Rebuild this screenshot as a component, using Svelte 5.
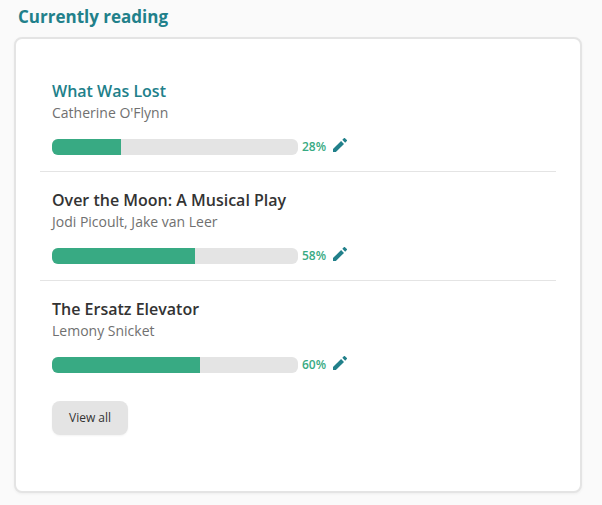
<script>
	let books = [
		{ title: 'What Was Lost', author: "Catherine O'Flynn", progress: 28, active: true },
		{ title: 'Over the Moon: A Musical Play', author: 'Jodi Picoult, Jake van Leer', progress: 58 },
		{ title: 'The Ersatz Elevator', author: 'Lemony Snicket', progress: 60 }
	];
</script>

<section class="reading">
	<h2>Currently reading</h2>
	<div class="card">
		<ul>
			{#each books as book}
				<li>
					<h3><a href="#book" class:active={book.active}>{book.title}</a></h3>
					<p class="author">{book.author}</p>
					<div class="progress">
						<div
							class="track"
							role="progressbar"
							aria-label={book.title}
							aria-valuenow={book.progress}
							aria-valuemin="0"
							aria-valuemax="100"
						>
							<div class="fill" style="width: {book.progress}%"></div>
						</div>
						<span class="percent">{book.progress}%</span>
						<button class="edit" aria-label="Edit progress for {book.title}">
							<svg viewBox="0 0 14 14" aria-hidden="true">
								<path d="M0 11.1V14h2.9l8.1-8.1L8.1 3z" />
								<path d="M13.8 3.1a.8.8 0 0 0 0-1.1L12 .2a.8.8 0 0 0-1.1 0L9.3 1.8l2.9 2.9z" />
							</svg>
						</button>
					</div>
				</li>
			{/each}
		</ul>
		<button class="view_all">View all</button>
	</div>
</section>

<style>
	:global(body) {
		background: #fafafa;
		font-family: 'Open Sans', sans-serif;
	}
	.reading {
		padding: 5px 20px 12px 14px;
	}
	h2 {
		margin: 0;
		padding: 0 4px 8px;
		color: #21808a;
		font-size: 17px;
		font-weight: 700;
		line-height: 24px;
	}
	.card {
		padding: 24px 24px 56px;
		background: white;
		border: 2px solid #e4e4e4;
		border-radius: 8px;
		box-shadow: 0 1px 3px rgba(0, 0, 0, 0.05);
	}
	ul {
		margin: 0;
		padding: 0;
		list-style: none;
	}
	li {
		padding: 16px 12px;
		border-bottom: 1px solid #e4e4e4;
	}
	li:last-child {
		border-bottom: none;
	}
	h3,
	.author {
		margin: 0;
	}
	h3 {
		font-size: 16px;
		font-weight: 600;
		line-height: 24px;
	}
	h3 a {
		color: #333;
		text-decoration: none;
	}
	h3 a.active {
		color: #21808a;
	}
	.author {
		color: #707070;
		font-size: 14px;
		line-height: 20px;
	}
	.progress {
		display: flex;
		align-items: center;
		height: 16px;
		margin-top: 16px;
	}
	.track {
		width: 50%;
		height: 16px;
		overflow: hidden;
		background: #e4e4e4;
		border-radius: 6px;
	}
	.fill {
		height: 100%;
		background: #38aa83;
	}
	.percent {
		margin-left: 4px;
		color: #38aa83;
		font-size: 12px;
		font-weight: 600;
		line-height: 16px;
	}
	button {
		border: none;
		font-family: inherit;
		cursor: pointer;
	}
	.edit {
		display: flex;
		margin: 0 0 4px 7px;
		padding: 0;
		background: none;
	}
	.edit svg {
		width: 14px;
		height: 14px;
		fill: #21808a;
	}
	.view_all {
		display: block;
		margin: 12px 12px 0;
		padding: 9px 17px;
		background: #e4e4e4;
		color: #333;
		font-size: 12px;
		line-height: 16px;
		border-radius: 8px;
		box-shadow: 0 1px 2px rgba(0, 0, 0, 0.05);
	}
</style>
